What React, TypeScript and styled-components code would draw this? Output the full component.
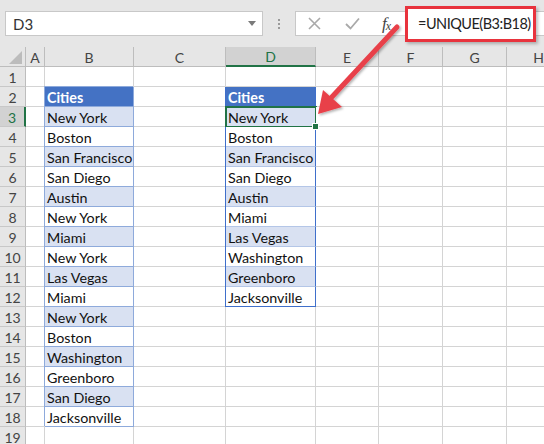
import React from "react";
import styled, { createGlobalStyle, css } from "styled-components";

const GlobalStyle = createGlobalStyle`
  html, body { margin: 0; padding: 0; background: #ffffff; }
  body { font-family: Lato, "Open Sans", "Liberation Sans", sans-serif; }
`;

const FONT = `Lato, "Open Sans", "Liberation Sans", sans-serif`;
const GRID = "#d4d4d4";
const GREEN = "#217346";
const LIGHT_BLUE = "#8eaadb";
const DARK_BLUE = "#3f6fcb";
const INNER_BLUE = "#b4c6e7";

const Page = styled.div`
  position: relative;
  width: 544px;
  height: 444px;
  overflow: hidden;
  background: #fff;
  font-family: ${FONT};
`;

const TopBar = styled.div`
  height: 47px;
  box-sizing: border-box;
  background: #e6e6e6;
  display: flex;
  align-items: center;
  padding: 0 0 0 5px;
`;

const NameBox = styled.div`
  width: 258px;
  height: 25px;
  box-sizing: border-box;
  background: #fff;
  border: 1px solid #c8c8c8;
  display: flex;
  align-items: center;
  justify-content: space-between;
  padding: 0 6px 0 7px;
  font-size: 15px;
  color: #333;
`;

const Caret = styled.span`
  width: 0;
  height: 0;
  border-left: 4px solid transparent;
  border-right: 4px solid transparent;
  border-top: 5px solid #7a7a7a;
`;

const Dots = styled.div`
  width: 32px;
  display: flex;
  flex-direction: column;
  align-items: center;
  gap: 2px;
  span {
    width: 2px;
    height: 2px;
    background: #9a9a9a;
  }
`;

const FormulaBar = styled.div`
  flex: 1;
  height: 25px;
  box-sizing: border-box;
  background: #fff;
  border: 1px solid #c8c8c8;
  border-right: none;
  display: flex;
  align-items: center;
`;

const ToolIcon = styled.span<{ $w: number }>`
  width: ${(p) => p.$w}px;
  display: flex;
  justify-content: center;
  align-items: center;
  color: #a6a6a6;
`;

const Fx = styled.span`
  font-family: "Liberation Serif", serif;
  font-style: italic;
  font-size: 17px;
  color: #444;
  letter-spacing: -1px;
  sub {
    font-size: 12px;
    vertical-align: -1px;
  }
`;

const FormulaInput = styled.div`
  margin-left: 5px;
  width: 131px;
  height: 36px;
  box-sizing: border-box;
  border: 3px solid #e8333d;
  box-shadow: 2px 2px 3px rgba(0, 0, 0, 0.25);
  background: #fff;
  display: flex;
  align-items: center;
  padding-left: 10px;
  font-size: 14.5px;
  letter-spacing: -0.5px;
  white-space: nowrap;
  color: #222;
`;

const Sheet = styled.div`
  display: grid;
  grid-template-columns: 26px 19px 89px 92px 90px 63px 64px 64px 64px;
  grid-auto-rows: 20px;
`;

const HeadCell = styled.div<{ $active?: boolean }>`
  box-sizing: border-box;
  background: ${(p) => (p.$active ? "#d2d2d2" : "#e6e6e6")};
  border-right: 1px solid #bdbdbd;
  border-bottom: ${(p) => (p.$active ? `2px solid ${GREEN}` : "1px solid #bdbdbd")};
  color: ${(p) => (p.$active ? GREEN : "#444")};
  font-size: 14px;
  display: flex;
  align-items: center;
  justify-content: center;
  padding-top: 1px;
`;

const Corner = styled.div`
  box-sizing: border-box;
  background: #e6e6e6;
  border-right: 1px solid #bdbdbd;
  border-bottom: 1px solid #bdbdbd;
  display: flex;
  align-items: flex-end;
  justify-content: flex-end;
  padding: 0 3px 2px 0;
  span {
    width: 0;
    height: 0;
    border-left: 13px solid transparent;
    border-bottom: 13px solid #bcbcbc;
  }
`;

const RowHead = styled.div<{ $active?: boolean }>`
  box-sizing: border-box;
  background: ${(p) => (p.$active ? "#d2d2d2" : "#e6e6e6")};
  border-right: ${(p) => (p.$active ? `2px solid ${GREEN}` : "1px solid #bdbdbd")};
  border-bottom: 1px solid #c8c8c8;
  color: ${(p) => (p.$active ? GREEN : "#444")};
  font-size: 14px;
  display: flex;
  align-items: center;
  justify-content: center;
  padding-top: 1px;
`;

type Kind = "none" | "head" | "band" | "plain";
type Frame = "none" | "light" | "spill";

const Cell = styled.div<{ $kind: Kind; $frame: Frame; $last?: boolean; $selected?: boolean }>`
  position: relative;
  box-sizing: border-box;
  border-right: 1px solid ${GRID};
  border-bottom: 1px solid ${GRID};
  font-size: 14.3px;
  line-height: 19px;
  padding: 1px 0 0 2px;
  white-space: nowrap;
  overflow: visible;
  color: #111;
  background: ${(p) =>
    p.$kind === "head" ? "#4472c4" : p.$kind === "band" ? "#d9e1f2" : "#fff"};
  ${(p) =>
    p.$kind === "head" &&
    css`
      color: #fff;
      font-weight: 700;
    `}
  ${(p) =>
    p.$frame === "light" &&
    css`
      border-right-color: ${LIGHT_BLUE};
      border-bottom-color: ${LIGHT_BLUE};
      box-shadow: -1px -1px 0 0 ${LIGHT_BLUE};
    `}
  ${(p) =>
    p.$frame === "spill" &&
    css`
      border-right-color: ${DARK_BLUE};
      border-bottom-color: ${p.$last ? DARK_BLUE : INNER_BLUE};
      box-shadow: -1px 0 0 0 ${DARK_BLUE};
    `}
  ${(p) =>
    p.$selected &&
    css`
      outline: 2px solid ${GREEN};
      outline-offset: -1px;
    `}
`;

const FillHandle = styled.span`
  position: absolute;
  right: -4px;
  bottom: -4px;
  width: 5px;
  height: 5px;
  background: ${GREEN};
  border: 1px solid #fff;
  z-index: 2;
`;

const Arrow = styled.svg`
  position: absolute;
  left: 0;
  top: 0;
  pointer-events: none;
`;

const listB = [
  "New York",
  "Boston",
  "San Francisco",
  "San Diego",
  "Austin",
  "New York",
  "Miami",
  "New York",
  "Las Vegas",
  "Miami",
  "New York",
  "Boston",
  "Washington",
  "Greenboro",
  "San Diego",
  "Jacksonville",
];

const listD = [
  "New York",
  "Boston",
  "San Francisco",
  "San Diego",
  "Austin",
  "Miami",
  "Las Vegas",
  "Washington",
  "Greenboro",
  "Jacksonville",
];

const cols = ["A", "B", "C", "D", "E", "F", "G", "H"];

function cellFor(col: string, row: number) {
  let text = "";
  let kind: Kind = "none";
  let frame: Frame = "none";
  let last = false;
  if (col === "B" && row >= 2 && row <= 18) {
    frame = "light";
    if (row === 2) {
      kind = "head";
      text = "Cities";
    } else {
      kind = row % 2 === 1 ? "band" : "plain";
      text = listB[row - 3];
    }
  }
  if (col === "D" && row >= 2 && row <= 12) {
    frame = "spill";
    last = row === 12;
    if (row === 2) {
      kind = "head";
      text = "Cities";
    } else {
      kind = row % 2 === 1 ? "band" : "plain";
      text = listD[row - 3];
    }
  }
  return { text, kind, frame, last };
}

export default function App() {
  const rows = Array.from({ length: 19 }, (_, i) => i + 1);
  return (
    <Page>
      <GlobalStyle />
      <TopBar>
        <NameBox>
          <span>D3</span>
          <Caret />
        </NameBox>
        <Dots>
          <span />
          <span />
          <span />
        </Dots>
        <FormulaBar>
          <ToolIcon $w={36}>
            <svg width="13" height="13" viewBox="0 0 13 13">
              <path d="M1 1 L12 12 M12 1 L1 12" stroke="#a9a9a9" strokeWidth="1.6" fill="none" />
            </svg>
          </ToolIcon>
          <ToolIcon $w={40}>
            <svg width="15" height="13" viewBox="0 0 15 13">
              <path d="M1 7 L5.5 11.5 L14 1.5" stroke="#a9a9a9" strokeWidth="1.8" fill="none" />
            </svg>
          </ToolIcon>
          <ToolIcon $w={28}>
            <Fx>
              f<sub>x</sub>
            </Fx>
          </ToolIcon>
          <FormulaInput>=UNIQUE(B3:B18)</FormulaInput>
        </FormulaBar>
      </TopBar>
      <Sheet>
        <Corner>
          <span />
        </Corner>
        {cols.map((c) => (
          <HeadCell key={c} $active={c === "D"}>
            {c}
          </HeadCell>
        ))}
        {rows.map((r) => (
          <React.Fragment key={r}>
            <RowHead $active={r === 3}>{r}</RowHead>
            {cols.map((c) => {
              const info = cellFor(c, r);
              const selected = c === "D" && r === 3;
              return (
                <Cell
                  key={c}
                  $kind={info.kind}
                  $frame={info.frame}
                  $last={info.last}
                  $selected={selected}
                >
                  {info.text}
                  {selected && <FillHandle />}
                </Cell>
              );
            })}
          </React.Fragment>
        ))}
      </Sheet>
      <Arrow width="544" height="444" viewBox="0 0 544 444">
        <defs>
          <filter id="sh" x="-20%" y="-20%" width="140%" height="140%">
            <feDropShadow dx="1.5" dy="1.5" stdDeviation="1.2" floodColor="#000" floodOpacity="0.3" />
          </filter>
        </defs>
        <g filter="url(#sh)">
          <line x1="397" y1="27" x2="330" y2="99" stroke="#e8404a" strokeWidth="5" strokeLinecap="round" />
          <polygon points="318,114 323,90 342,107" fill="#e8404a" />
        </g>
      </Arrow>
    </Page>
  );
}
